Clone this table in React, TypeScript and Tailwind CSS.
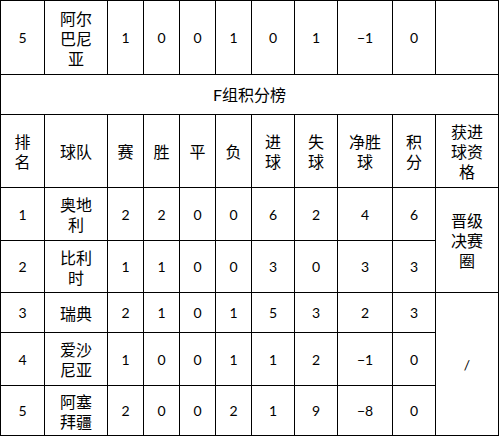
import React from "react";

type Row = {
  rank: string;
  team: string;
  nums: string[];
  h: string;
};

const rows: Row[] = [
  { rank: "1", team: "奥地利", nums: ["2", "2", "0", "0", "6", "2", "4", "6"], h: "h-[53px]" },
  { rank: "2", team: "比利时", nums: ["1", "1", "0", "0", "3", "0", "3", "3"], h: "h-[52px]" },
  { rank: "3", team: "瑞典", nums: ["2", "1", "0", "1", "5", "3", "2", "3"], h: "h-[40px]" },
  { rank: "4", team: "爱沙尼亚", nums: ["1", "0", "0", "1", "1", "2", "−1", "0"], h: "h-[53px]" },
  { rank: "5", team: "阿塞拜疆", nums: ["2", "0", "0", "2", "1", "9", "−8", "0"], h: "h-[50px]" },
];

const cjk = "px-2 text-[16px] leading-[20px] border border-black text-center align-middle";
const num = "px-1 text-[14px] font-['Lato','Noto_Sans_CJK_SC',sans-serif] border border-black text-center align-middle";

const widths = [44, 63, 36, 36, 36, 36, 43, 43, 55, 43, 63];

export default function App() {
  return (
    <div className="w-[503px] h-[440px] bg-white overflow-hidden">
      <table className="table-fixed border-collapse w-[499px] text-black font-['Noto_Sans_CJK_SC',sans-serif]">
        <colgroup>
          {widths.map((w, i) => (
            <col key={i} style={{ width: w }} />
          ))}
        </colgroup>
        <tbody>
          <tr className="h-[74px]">
            <td className={num}>5</td>
            <td className={cjk}>阿尔巴尼亚</td>
            <td className={num}>1</td>
            <td className={num}>0</td>
            <td className={num}>0</td>
            <td className={num}>1</td>
            <td className={num}>0</td>
            <td className={num}>1</td>
            <td className={num}>−1</td>
            <td className={num}>0</td>
            <td className={cjk}></td>
          </tr>
          <tr className="h-[40px]">
            <td colSpan={11} className={cjk}>
              <span className="font-['Lato',sans-serif]">F</span>组积分榜
            </td>
          </tr>
          <tr className="h-[73px]">
            <td className={cjk}>排名</td>
            <td className={cjk}>球队</td>
            <td className={cjk}>赛</td>
            <td className={cjk}>胜</td>
            <td className={cjk}>平</td>
            <td className={cjk}>负</td>
            <td className={cjk}>进球</td>
            <td className={cjk}>失球</td>
            <td className={cjk}>净胜球</td>
            <td className={cjk}>积分</td>
            <td className={cjk}>获进球资格</td>
          </tr>
          {rows.map((r, i) => (
            <tr key={r.rank} className={r.h}>
              <td className={num}>{r.rank}</td>
              <td className={cjk}>{r.team}</td>
              {r.nums.map((n, j) => (
                <td key={j} className={num}>
                  {n}
                </td>
              ))}
              {i === 0 && (
                <td rowSpan={2} className={cjk}>
                  晋级决赛圈
                </td>
              )}
              {i === 2 && (
                <td rowSpan={3} className={num}>
                  /
                </td>
              )}
            </tr>
          ))}
        </tbody>
      </table>
    </div>
  );
}
